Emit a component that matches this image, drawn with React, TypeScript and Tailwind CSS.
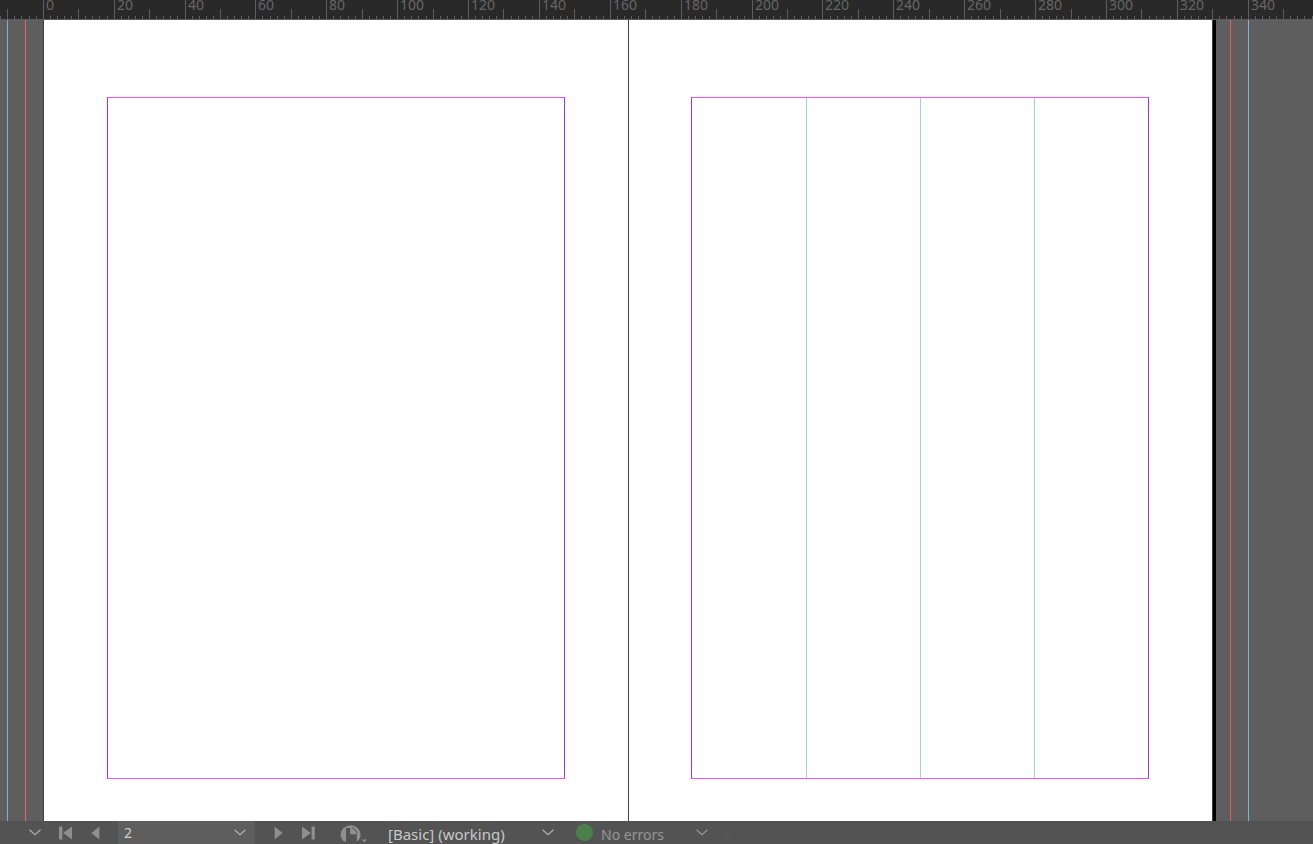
import React from "react";

const ORIGIN = 43;
const TICK = 7.0882;
const FIRST = -6;
const LAST = 182;

const tickX = (i: number) => Math.max(0, Math.floor(ORIGIN + i * TICK + 0.25));

const ticks = Array.from({ length: LAST - FIRST }, (_, k) => {
  const i = FIRST + k;
  return { i, width: tickX(i + 1) - tickX(i) };
});

function Ruler() {
  return (
    <div className="flex h-5 shrink-0 items-end overflow-hidden border-b border-[#5b595b] bg-[#292929]" aria-label="Horizontal ruler, millimetres">
      {ticks.map(({ i, width }) => {
        if (i % 10 === 0) {
          return (
            <div key={i} className="h-full shrink-0 border-l border-[#5e5e5e]" style={{ width }}>
              <span className="block pl-0.5 text-[14px] leading-[9px] whitespace-nowrap text-[#666666]">{i * 2}</span>
            </div>
          );
        }
        return (
          <div
            key={i}
            className={i % 5 === 0 ? "h-2.5 shrink-0 border-l border-[#5e5e5e]" : "h-[3px] shrink-0 border-l border-[#5e5e5e]"}
            style={{ width }}
          />
        );
      })}
    </div>
  );
}

function Chevron({ className }: { className: string }) {
  return (
    <svg width="12" height="7" viewBox="0 0 12 7" fill="none" className={className} aria-hidden="true">
      <path d="M0.5 0.8 L6 5.7 L11.5 0.8" stroke="currentColor" strokeWidth="1.2" />
    </svg>
  );
}

const margins = "h-full border border-x-[#9933ff] border-y-[#ff4fff]";

function Spread() {
  return (
    <main className="flex min-h-0 flex-1 overflow-hidden bg-[#5e5e5e]">
      <div className="flex w-[43px] shrink-0">
        <div className="w-2 border-r border-[#78b4d2]" />
        <div className="w-[18px] border-r border-[#f55a6e]" />
      </div>
      <section className="w-[585px] shrink-0 border-l border-[#404040] bg-white px-[63px] pt-[77px] pb-[42px]" aria-label="Page 2">
        <div className={margins} />
      </section>
      <section className="w-[585px] shrink-0 border-x border-[#404040] bg-white pt-[77px] pr-[63px] pb-[42px] pl-[62px]" aria-label="Page 3">
        <div className={margins + " grid grid-cols-4"}>
          <div />
          <div className="border-l border-[#a0cdff]" />
          <div className="border-l border-[#a0cdff]" />
          <div className="border-l border-[#a0cdff]" />
        </div>
      </section>
      <div className="flex flex-1">
        <div className="w-[3px] bg-black" />
        <div className="w-[15px] border-r border-[#ff505f]" />
        <div className="w-[18px] border-r border-[#78b9dc]" />
      </div>
    </main>
  );
}

function StatusBar() {
  return (
    <footer className="flex h-[23px] shrink-0 items-center overflow-hidden bg-[#535353] text-[14px] leading-5 text-[#c8c8c8]">
      <button className="ml-7 flex h-full w-4 items-center" aria-label="Zoom level">
        <Chevron className="ml-px text-[#b0b0b0]" />
      </button>
      <button className="ml-[15px] flex h-full w-4 items-center" aria-label="First page">
        <svg width="14" height="14" viewBox="0 0 14 14" fill="#8f8f8f" className="mt-px" aria-hidden="true">
          <path d="M0 0.5h3.4v13H0zM13 0.5v13L4.2 7z" />
        </svg>
      </button>
      <button className="ml-4 flex h-full w-3 items-center" aria-label="Previous page">
        <svg width="10" height="14" viewBox="0 0 10 14" fill="#8f8f8f" className="mt-px" aria-hidden="true">
          <path d="M8.4 0.5v13L0.4 7z" />
        </svg>
      </button>
      <div className="ml-[15px] flex h-full w-[137px] items-center bg-[#5e5e5e] pl-1.5">
        <input className="w-20 bg-transparent text-[#d0d0d0] outline-none" defaultValue="2" aria-label="Page number" />
        <button className="ml-[30px] flex h-full items-center" aria-label="Choose page">
          <Chevron className="text-[#b0b0b0]" />
        </button>
      </div>
      <button className="ml-[19px] flex h-full w-3 items-center" aria-label="Next page">
        <svg width="10" height="14" viewBox="0 0 10 14" fill="#8f8f8f" className="mt-px" aria-hidden="true">
          <path d="M0.6 0.5v13L8.6 7z" />
        </svg>
      </button>
      <button className="ml-4 flex h-full w-4 items-center" aria-label="Last page">
        <svg width="14" height="14" viewBox="0 0 14 14" fill="#8f8f8f" className="mt-px" aria-hidden="true">
          <path d="M9.6 0.5h3.2v13H9.6zM0 0.5v13L8.8 7z" />
        </svg>
      </button>
      <button className="ml-[22px] flex h-full w-7 items-center" aria-label="Open document options">
        <svg width="28" height="20" viewBox="0 0 28 20" aria-hidden="true">
          <path d="M4.2 18.6A10 9.2 0 1 1 17 18.6z" fill="#8f8f8f" />
          <path d="M6 5H12.4L16.8 9.4V20H6z" fill="#535353" />
          <path d="M10.2 4.4H12L16.2 8.8V11.2H10.2z" fill="#8f8f8f" />
          <path d="M12.2 4.2L17.2 9.4" stroke="#535353" strokeWidth="1" />
          <path d="M21.5 16.4h5.5l-2.7 2.8z" fill="#8f8f8f" />
        </svg>
      </button>
      <button className="ml-5 flex h-full w-[166px] items-center justify-between">
        <span className="mt-0.5 whitespace-nowrap text-[15px]">[Basic] (working)</span>
        <Chevron className="text-[#b0b0b0]" />
      </button>
      <button className="ml-[22px] flex h-full w-[132px] items-center text-[#979797]">
        <span className="size-[17px] rounded-full bg-[#4b804b]" />
        <span className="mt-1 ml-2 whitespace-nowrap">No errors</span>
        <Chevron className="ml-auto text-[#969696]" />
      </button>
      <svg width="6" height="11" viewBox="0 0 6 11" fill="none" className="ml-[17px]" aria-hidden="true">
        <path d="M5 0.8L1 5.5L5 10.2" stroke="#5c5c5c" strokeWidth="1" />
      </svg>
    </footer>
  );
}

export default function App() {
  return (
    <div className="flex h-screen flex-col overflow-hidden font-['Noto_Sans',sans-serif]">
      <Ruler />
      <Spread />
      <StatusBar />
    </div>
  );
}
